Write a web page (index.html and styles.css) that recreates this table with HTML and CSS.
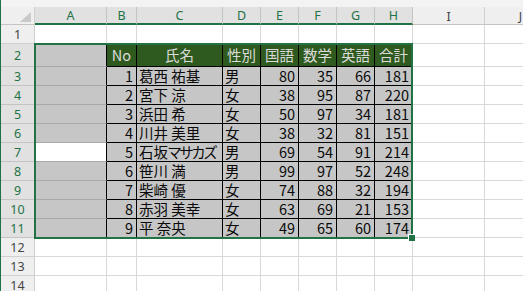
FILE: index.html
```html
<!DOCTYPE html>
<html lang="ja">
<head>
    <meta charset="UTF-8">
    <meta name="viewport" content="width=device-width, initial-scale=1.0">
    <title>成績一覧</title>
    <link rel="stylesheet" href="styles.css">
</head>
<body>

<div class="sheet">
    <div class="topbar"></div>
    <div class="grid" id="grid">
        <div class="selection"><span class="handle"></span></div>
    </div>
</div>

<script>
    const columns = ['A', 'B', 'C', 'D', 'E', 'F', 'G', 'H', 'I', 'J'];
    const header = ['No', '氏名', '性別', '国語', '数学', '英語', '合計'];
    const students = [
        [1, '葛西 祐基', '男', 80, 35, 66, 181],
        [2, '宮下 涼', '女', 38, 95, 87, 220],
        [3, '浜田 希', '女', 50, 97, 34, 181],
        [4, '川井 美里', '女', 38, 32, 81, 151],
        [5, '石坂 マサカズ', '男', 69, 54, 91, 214],
        [6, '笹川 満', '男', 99, 97, 52, 248],
        [7, '柴崎 優', '女', 74, 88, 32, 194],
        [8, '赤羽 美幸', '女', 63, 69, 21, 153],
        [9, '平 奈央', '女', 49, 65, 60, 174]
    ];
    const totalRows = 14;
    const activeRow = 7;

    function makeCell(classes, text) {
        const el = document.createElement('div');
        el.className = classes;
        if (typeof text === 'string' && /[ァ-ヶー]/.test(text)) {
            // katakana is set a little tighter than kanji
            text.split(/([ァ-ヶー]+)/).forEach(part => {
                if (!part) return;
                if (/[ァ-ヶー]/.test(part)) {
                    const kana = document.createElement('span');
                    kana.className = 'kana';
                    kana.textContent = part;
                    el.appendChild(kana);
                } else {
                    el.appendChild(document.createTextNode(part));
                }
            });
        } else if (text !== undefined) {
            el.textContent = text;
        }
        return el;
    }

    function buildSheet() {
        const grid = document.getElementById('grid');

        // column headers
        grid.appendChild(makeCell('corner'));
        columns.forEach((letter, i) => {
            const sel = i < 8 ? ' sel' : '';
            grid.appendChild(makeCell('colhead' + sel, letter));
        });

        for (let r = 1; r <= totalRows; r++) {
            const inRange = r >= 2 && r <= 11;
            grid.appendChild(makeCell('rowhead' + (inRange ? ' sel' : ''), r));

            // column A
            let aClass = 'cell';
            if (inRange) aClass += r === activeRow ? ' active edge' : ' sel edge';
            grid.appendChild(makeCell(aClass));

            // columns B..H hold the table
            for (let c = 0; c < 7; c++) {
                let cls = 'cell';
                let text;
                if (r === 1) {
                    cls += ' above';
                } else if (r === 2) {
                    cls += ' tbl head';
                    text = header[c];
                } else if (inRange) {
                    const value = students[r - 3][c];
                    cls += ' sel tbl';
                    cls += typeof value === 'number' ? ' num' : ' txt';
                    text = value;
                }
                grid.appendChild(makeCell(cls, text));
            }

            // columns I, J
            grid.appendChild(makeCell('cell'));
            grid.appendChild(makeCell('cell'));
        }
    }

    buildSheet();
</script>

</body>
</html>
```

FILE: styles.css
```css
html, body {
    margin: 0;
    overflow: hidden;
    background-color: #ffffff;
}
.sheet {
    width: 522px;
    height: 291px;
    border-left: 1px solid #217346;
    overflow: hidden;
}
.topbar {
    height: 7px;
    background-color: #f3f3f3;
}
.grid {
    position: relative;
    display: grid;
    grid-template-columns: 34px 72px 30px 86px repeat(5, 38px) 72px 72px;
    grid-template-rows: 18px 19px 23px repeat(12, 19px);
    font-family: "Noto Sans CJK JP", "Noto Sans", sans-serif;
    font-size: 14.5px;
    color: #0a0a0a;
}
.grid > div {
    box-sizing: border-box;
    display: flex;
    align-items: center;
    line-height: 1.2;
    white-space: nowrap;
}

/* headers */
.corner, .colhead, .rowhead {
    background-color: #efefef;
    border-right: 1px solid #d0d0d0;
    border-bottom: 1px solid #d0d0d0;
    font-family: "Noto Sans", sans-serif;
    font-size: 12.5px;
    color: #444444;
    justify-content: center;
}
.corner {
    position: relative;
    border-bottom-color: #c4c4c4;
}
.corner::after {
    content: "";
    position: absolute;
    right: 3px;
    bottom: 2px;
    border-left: 11px solid transparent;
    border-bottom: 10px solid #c9c9c9;
}
.colhead {
    padding-top: 1px;
    border-bottom-color: #c4c4c4;
}
.colhead.sel {
    background-color: #e1e1e1;
    color: #217346;
    border-bottom: 2px solid #217346;
    border-right-color: #c4c4c4;
}
.rowhead.sel {
    background-color: #e1e1e1;
    color: #217346;
    border-bottom-color: #c4c4c4;
}

/* cells */
.cell {
    background-color: #ffffff;
    border-right: 1px solid #d9d9d9;
    border-bottom: 1px solid #d9d9d9;
}
.cell.sel {
    background-color: #c6c6c6;
    border-bottom-color: #a9a9a9;
    border-right-color: #a9a9a9;
}
.cell.active {
    background-color: #ffffff;
    border-bottom-color: #a9a9a9;
}
.cell.edge {
    border-right-color: #000000;
}
.cell.above {
    border-bottom-color: #000000;
}
.cell.tbl {
    border-right-color: #000000;
    border-bottom-color: #000000;
}
.cell.head {
    background-color: #2f5a1f;
    color: #dadada;
    justify-content: center;
}
.cell.num {
    justify-content: flex-end;
    padding-right: 3px;
}
.cell.txt {
    padding-left: 2px;
}
.kana {
    font-feature-settings: "palt";
    letter-spacing: -1.5px;
}

/* selected range outline */
.selection {
    position: absolute;
    left: 33px;
    top: 36px;
    width: 379px;
    height: 196px;
    border: 2px solid #217346;
    box-sizing: border-box;
    pointer-events: none;
    z-index: 2;
}
.handle {
    position: absolute;
    right: -4px;
    bottom: -4px;
    width: 6px;
    height: 6px;
    background-color: #217346;
    border-left: 1px solid #ffffff;
    border-top: 1px solid #ffffff;
}
```
